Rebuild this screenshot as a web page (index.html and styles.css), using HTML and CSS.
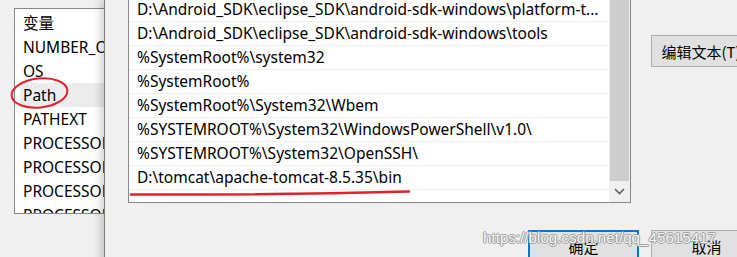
FILE: index.html
```html
<!DOCTYPE html>
<html lang="zh-CN">
<head>
  <meta charset="UTF-8">
  <title>编辑环境变量</title>
  <link rel="stylesheet" href="styles.css">
</head>
<body>
  <div class="desk">
    <div class="back-window">
      <ul class="var-list">
        <li>变量</li>
        <li>NUMBER_OF_PROCESSORS</li>
        <li>OS</li>
        <li class="selected">Path</li>
        <li>PATHEXT</li>
        <li>PROCESSOR_ARCHITECTURE</li>
        <li>PROCESSOR_IDENTIFIER</li>
        <li>PROCESSOR_LEVEL</li>
        <li>PROCESSOR_REVISION</li>
      </ul>
    </div>

    <div class="edit-dialog">
      <div class="dialog-body">
        <div class="path-list">
          <ul class="path-rows">
            <li>D:\Android_SDK\eclipse_SDK\android-sdk-windows\platform-t...</li>
            <li>D:\Android_SDK\eclipse_SDK\android-sdk-windows\tools</li>
            <li>%SystemRoot%\system32</li>
            <li>%SystemRoot%</li>
            <li>%SystemRoot%\System32\Wbem</li>
            <li>%SYSTEMROOT%\System32\WindowsPowerShell\v1.0\</li>
            <li>%SYSTEMROOT%\System32\OpenSSH\</li>
            <li>D:\tomcat\apache-tomcat-8.5.35\bin</li>
          </ul>
          <div class="scrollbar">
            <div class="thumb"></div>
            <div class="arrow">
              <svg width="11" height="7" viewBox="0 0 11 7"><path d="M1 1 L5.5 5.5 L10 1" fill="none" stroke="#606060" stroke-width="1.6"/></svg>
            </div>
          </div>
        </div>
        <div class="side-buttons">
          <button type="button" class="win-btn wide">编辑文本(T)</button>
        </div>
      </div>
      <div class="dialog-footer">
        <button type="button" class="win-btn default">确定</button>
        <button type="button" class="win-btn">取消</button>
      </div>
    </div>

    <svg class="marks" width="737" height="257" viewBox="0 0 737 257">
      <ellipse cx="39.5" cy="93" rx="28" ry="14.5" transform="rotate(-6 39.5 93)" fill="none" stroke="#e3212b" stroke-width="2"/>
      <path d="M131 194.5 Q270 195 409 191.5" fill="none" stroke="#e3212b" stroke-width="2.5" stroke-linecap="round"/>
    </svg>

    <div class="watermark">https://blog.csdn.net/qq_45615417</div>
  </div>
</body>
</html>
```

FILE: styles.css
```css
body {
  margin: 0;
  background-color: #f0f0f0;
  font-family: "Noto Sans", "Noto Sans CJK SC", sans-serif;
  font-size: 15.5px;
  color: #000;
}
ul {
  list-style: none;
  margin: 0;
  padding: 0;
}
.desk {
  position: relative;
  width: 737px;
  height: 257px;
  overflow: hidden;
}

/* window behind */
.back-window {
  padding: 8px 0 0 14px;
}
.var-list {
  width: 160px;
  height: 206px;
  padding-top: 2px;
  box-sizing: border-box;
  background-color: #fff;
  border: 1px solid #828790;
  overflow: hidden;
}
.var-list li {
  height: 24px;
  line-height: 24px;
  margin-left: 5px;
  padding-left: 3px;
  white-space: nowrap;
}
.var-list li.selected {
  background-color: #ececec;
}

/* front dialog */
.edit-dialog {
  position: absolute;
  top: 0;
  left: 104px;
  width: 680px;
  height: 280px;
  padding-left: 23px;
  box-sizing: border-box;
  background-color: #f0f0f0;
  border-left: 1px solid #7d7d7d;
  box-shadow: -4px 0 7px rgba(0, 0, 0, 0.16);
}
.dialog-body {
  display: flex;
  align-items: flex-start;
}
.path-list {
  display: flex;
  flex-shrink: 0;
  width: 503px;
  height: 206px;
  margin-top: -3px;
  box-sizing: border-box;
  background-color: #fff;
  border: 1px solid #828790;
}
.path-rows {
  flex: 1;
  min-width: 0;
}
.path-rows li {
  height: 23px;
  line-height: 23px;
  padding-left: 8px;
  border-bottom: 1px solid #f0f0f0;
  white-space: nowrap;
  overflow: hidden;
}
.scrollbar {
  width: 21px;
  display: flex;
  flex-direction: column;
  background-color: #f0f0f0;
}
.thumb {
  height: 183px;
  width: 19px;
  margin-left: 1px;
  background-color: #cdcdcd;
}
.arrow {
  flex: 1;
  display: flex;
  align-items: center;
  justify-content: center;
}
.side-buttons {
  flex-shrink: 0;
  margin-left: 20px;
  padding-top: 35px;
}
.win-btn {
  height: 32px;
  width: 111px;
  padding: 0;
  font-family: "Noto Sans CJK SC", "Noto Sans", sans-serif;
  font-size: 15px;
  color: #000;
  background-color: #e1e1e1;
  border: 1px solid #adadad;
  box-sizing: border-box;
}
.win-btn.wide {
  width: 100px;
}
.win-btn.default {
  border: 2px solid #0078d7;
}
.dialog-footer {
  display: flex;
  justify-content: flex-end;
  gap: 12px;
  width: 634px;
  margin-top: 27px;
}

/* annotations */
.marks {
  position: absolute;
  top: 0;
  left: 0;
  pointer-events: none;
}
.watermark {
  position: absolute;
  left: 483px;
  top: 229px;
  font-family: "Liberation Sans", Arial, sans-serif;
  font-size: 15.2px;
  color: rgba(255, 255, 255, 0.9);
  text-shadow: 1px 0 0 #a0a0a0, -1px 0 0 #a0a0a0, 0 1px 0 #a0a0a0, 0 -1px 0 #a0a0a0;
  white-space: nowrap;
}
```
